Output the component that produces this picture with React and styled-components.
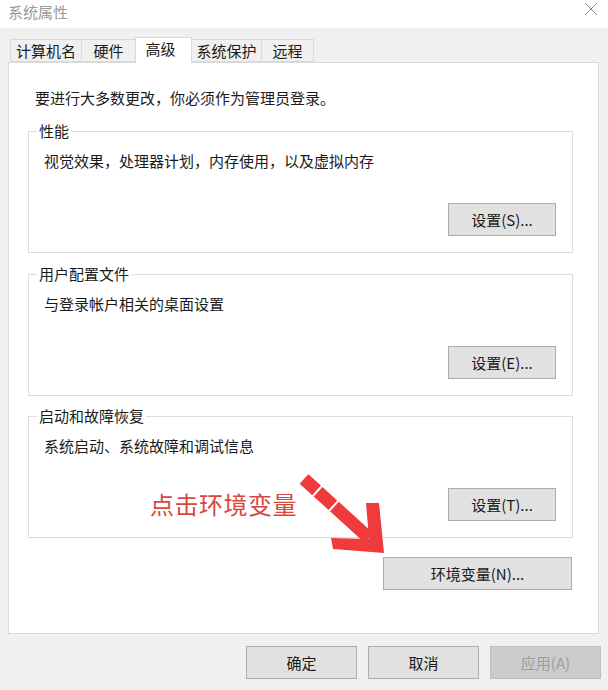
import styled, { createGlobalStyle } from "styled-components";

const GlobalStyle = createGlobalStyle`
  html, body {
    margin: 0;
    padding: 0;
    background: #f0f0f0;
  }
  body {
    font-family: "Noto Sans CJK SC", "Liberation Sans", sans-serif;
    font-size: 15px;
    color: #1a1a1a;
  }
`;

const Window = styled.div`
  position: relative;
  width: 608px;
  height: 690px;
  background: #f0f0f0;
  overflow: hidden;
`;

const TitleBar = styled.div`
  height: 28px;
  background: #ffffff;
  display: flex;
  align-items: center;
  justify-content: space-between;
  padding: 0 10px 4px 8px;
  box-sizing: border-box;
`;

const Title = styled.span`
  color: #9a9a9a;
  font-size: 15px;
  line-height: 20px;
`;

const CloseIcon = styled.svg`
  width: 14px;
  height: 14px;
  margin-top: -6px;
`;

const TabStrip = styled.div`
  display: flex;
  align-items: flex-end;
  margin: 8px 0 0 10px;
  height: 26px;
  position: relative;
  z-index: 1;
`;

const Tab = styled.div`
  box-sizing: border-box;
  width: ${(p) => p.$w}px;
  height: ${(p) => (p.$active ? 26 : 23)}px;
  margin-left: -1px;
  margin-bottom: ${(p) => (p.$active ? -1 : 0)}px;
  border: 1px solid #d9d9d9;
  border-bottom: ${(p) => (p.$active ? "none" : "1px solid #d9d9d9")};
  background: ${(p) => (p.$active ? "#ffffff" : "#f0f0f0")};
  display: flex;
  align-items: ${(p) => (p.$active ? "flex-start" : "center")};
  justify-content: center;
  padding: ${(p) => (p.$active ? "1px 6px 0 0" : "0")};
  line-height: 20px;
  font-size: 15px;
  color: #1a1a1a;
  &:first-child {
    margin-left: 0;
  }
`;

const Panel = styled.div`
  box-sizing: border-box;
  margin: 0 9px 0 8px;
  height: 572px;
  background: #ffffff;
  border: 1px solid #d9d9d9;
  padding: 0 25px 0 19px;
  display: flex;
  flex-direction: column;
`;

const Intro = styled.p`
  margin: 25px 0 0 7px;
  line-height: 20px;
`;

const Group = styled.div`
  position: relative;
  box-sizing: border-box;
  height: 122px;
  margin-top: ${(p) => p.$top}px;
  border: 1px solid #dcdcdc;
  padding: 19px 16px 16px 15px;
  display: flex;
  flex-direction: column;
`;

const Legend = styled.span`
  position: absolute;
  top: -11px;
  left: 8px;
  padding: 0 2px;
  background: #ffffff;
  line-height: 20px;
`;

const Desc = styled.div`
  line-height: 20px;
`;

const Button = styled.button`
  box-sizing: border-box;
  width: ${(p) => p.$w}px;
  height: ${(p) => p.$h}px;
  border: 1px solid #adadad;
  background: #e1e1e1;
  font-family: "Noto Sans CJK SC", "Liberation Sans", sans-serif;
  font-size: 15px;
  color: #1a1a1a;
  padding: 0;
  line-height: 20px;
  &:disabled {
    background: #cccccc;
    border-color: #bfbfbf;
    color: #9d9d9d;
  }
`;

const GroupButton = styled(Button)`
  margin-top: auto;
  align-self: flex-end;
`;

const EnvButton = styled(Button)`
  align-self: flex-end;
  margin: 19px 1px 0 0;
`;

const Footer = styled.div`
  display: flex;
  justify-content: flex-end;
  gap: 11px;
  margin: 12px 7px 0 0;
`;

const Note = styled.span`
  position: absolute;
  left: 150px;
  top: 488px;
  font-size: 24px;
  line-height: 32px;
  color: #d8473e;
  letter-spacing: 0.5px;
`;

const Arrow = styled.svg`
  position: absolute;
  left: 290px;
  top: 465px;
  width: 110px;
  height: 100px;
`;

const tabs = [
  ["计算机名", 72],
  ["硬件", 55],
  ["高级", 57, true],
  ["系统保护", 71],
  ["远程", 53],
];

const groups = [
  { title: "性能", desc: "视觉效果，处理器计划，内存使用，以及虚拟内存", btn: "设置(S)...", top: 23 },
  { title: "用户配置文件", desc: "与登录帐户相关的桌面设置", btn: "设置(E)...", top: 21 },
  { title: "启动和故障恢复", desc: "系统启动、系统故障和调试信息", btn: "设置(T)...", top: 20 },
];

export default function App() {
  return (
    <>
      <GlobalStyle />
      <Window>
        <TitleBar>
          <Title>系统属性</Title>
          <CloseIcon viewBox="0 0 14 14">
            <path d="M1 1 L13 13 M13 1 L1 13" stroke="#8a8a8a" strokeWidth="1" fill="none" />
          </CloseIcon>
        </TitleBar>

        <TabStrip>
          {tabs.map(([label, w, active]) => (
            <Tab key={label} $w={w} $active={active}>
              {label}
            </Tab>
          ))}
        </TabStrip>

        <Panel>
          <Intro>要进行大多数更改，你必须作为管理员登录。</Intro>
          {groups.map((g) => (
            <Group key={g.title} $top={g.top}>
              <Legend>{g.title}</Legend>
              <Desc>{g.desc}</Desc>
              <GroupButton $w={108} $h={33}>{g.btn}</GroupButton>
            </Group>
          ))}
          <EnvButton $w={189} $h={33}>环境变量(N)...</EnvButton>
        </Panel>

        <Footer>
          <Button $w={111} $h={33}>确定</Button>
          <Button $w={111} $h={33}>取消</Button>
          <Button $w={111} $h={33} disabled>应用(A)</Button>
        </Footer>

        <Note>点击环境变量</Note>
        <Arrow viewBox="290 465 110 100">
          <line
            x1="304"
            y1="479"
            x2="369"
            y2="538"
            stroke="#ef3b3b"
            strokeWidth="13"
            strokeDasharray="17 2 20 2 200"
          />
          <polygon
            points="366,503 379,503 384,553 333,549 331,538 369,539"
            fill="#ef3b3b"
          />
        </Arrow>
      </Window>
    </>
  );
}
